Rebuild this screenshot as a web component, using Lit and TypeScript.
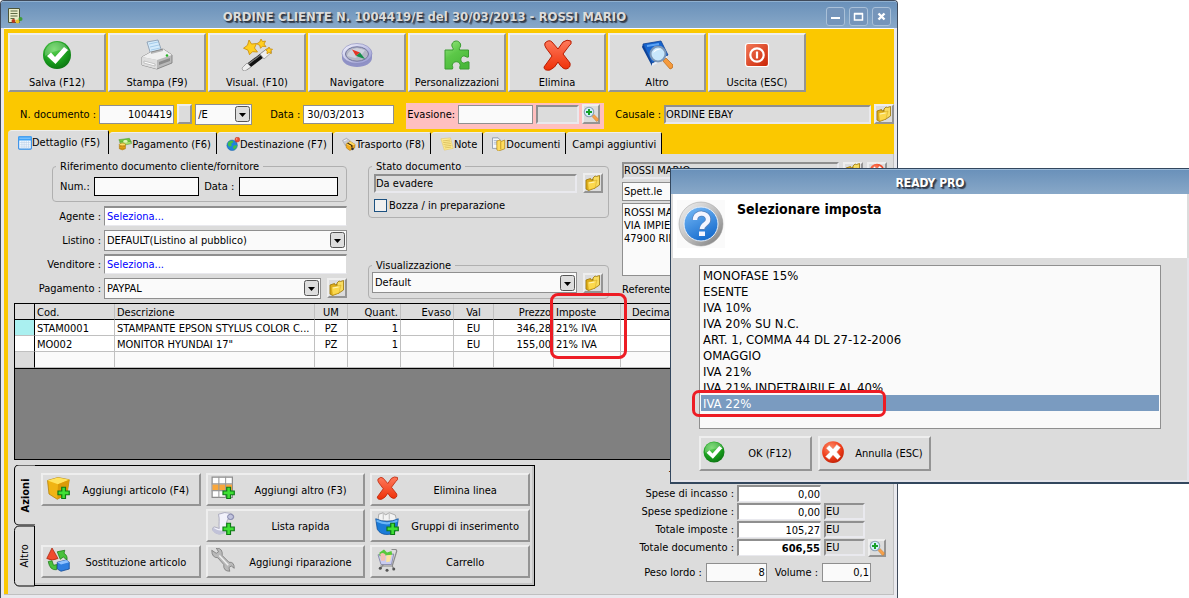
import { LitElement, html, css, svg, nothing, TemplateResult } from "lit";
import { customElement, property, state } from "lit/decorators.js";
import { classMap } from "lit/directives/class-map.js";

const plus = svg`<path d="M21 15h5v5h5v5h-5v5h-5v-5h-5v-5h5z" fill="#3fe035" stroke="#0c7a14" stroke-width="1.6"/>`;

const glyphs: Record<string, TemplateResult> = {
  check: svg`
    <defs><radialGradient id="green" cx=".4" cy=".3" r=".8"><stop offset="0" stop-color="#5fd455"/><stop offset=".6" stop-color="#179a1c"/><stop offset="1" stop-color="#0a6a10"/></radialGradient></defs>
    <circle cx="16" cy="16" r="14" fill="url(#green)"/>
    <path d="M4 12a12.500 12.500 0 0 1 24 0q-12-3-24 5z" fill="#fff" opacity=".22"/>
    <path d="M6 17l4-3.500 4 4.500 9-10 4 3-12.500 14z" fill="#fff"/>`,
  cancel: svg`
    <defs><radialGradient id="red" cx=".4" cy=".3" r=".8"><stop offset="0" stop-color="#ff8a68"/><stop offset=".6" stop-color="#ee3a17"/><stop offset="1" stop-color="#b41c04"/></radialGradient></defs>
    <circle cx="16" cy="16" r="14.500" fill="url(#red)"/>
    <path d="M7 11l4-4 5 5 5-6 5 4-5 6 5 6-4 4-6-6-5 6-5-4 6-6z" fill="#fff" stroke="#d4b0a8" stroke-width=".6"/>`,
  printer: svg`
    <path d="M6 3l11-2 4 12-11 3z" fill="#d4ebfb" stroke="#8296ac" stroke-width=".8"/>
    <path d="M8 5l9-2M9 8l9-2M10 11l9-2" stroke="#a4cbea" stroke-width="1"/>
    <path d="M1 18l9-5 12-3 9 6v8l-15 6-15-4z" fill="#b9b9b9" stroke="#777" stroke-width=".8"/>
    <path d="M1 18l9-5v2l12-3v-2l9 6-15 5z" fill="#f0f0f0"/>
    <path d="M1 18l15 3v9l-15-4z" fill="#dedede"/>
    <path d="M3 22l11 3v2l-11-3z" fill="#fff" stroke="#999" stroke-width=".5"/>
    <path d="M18 23l11-4v3l-11 4z" fill="#8b8b8b"/><circle cx="26" cy="16.500" r="1.300" fill="#28b428"/>`,
  wand: svg`
    <path d="M3 27l21-16 3 4-21 16z" fill="#111"/>
    <path d="M5 27l17-13" stroke="#7a7a7a" stroke-width="1.200"/>
    <path d="M1 29l5-5 4 4-6 4q-3 0-3-3zM19 15l8-6 4 4-8 7z" fill="#eee" stroke="#999" stroke-width=".8"/>
    <g fill="#ffcf20" stroke="#c98a05" stroke-width=".8"><path d="M8 1l2.500 4 5-.5-2 4.500 3 4-5-.3-3 3-1.500-4.500-4.500-2 4-3z"/><path d="M20 0l1.500 2.500 3-.4-1.500 3 2 2.500-3.500-.3-2 2-.8-3-3-1.500 3-1.800z"/><path d="M28 8l1 2 2.500.2-1.700 1.800.5 2.500-2.300-1-2 1.300.2-2.500-1.700-1.800 2.400-.6z"/></g>`,
  compass: svg`
    <defs><linearGradient id="rim" x2="1" y2="1"><stop stop-color="#f6f6ff"/><stop offset="1" stop-color="#9294cf"/></linearGradient></defs>
    <path d="M1 14v5c0 5 7 9 15 9s15-4 15-9v-5z" fill="#8f91c6"/>
    <ellipse cx="16" cy="14.500" rx="15" ry="10" fill="url(#rim)" stroke="#8587bb" stroke-width=".6"/>
    <ellipse cx="16" cy="15" rx="11.500" ry="7.200" fill="#b4b7c6" stroke="#70739c" stroke-width="1"/>
    <path d="M6 17q2-7 10-8l8 2q-3 6-10 8z" fill="#dadde8" opacity=".7"/>
    <path d="M11 10.500l8 3-4 3.500z" fill="#e63424"/><path d="M24 20l-9-3 4-3.500z" fill="#158d4a"/>`,
  puzzle: svg`
    <defs><linearGradient id="leaf" x2=".6" y2="1"><stop stop-color="#9be884"/><stop offset=".5" stop-color="#5cc848"/><stop offset="1" stop-color="#4ab83a"/></linearGradient></defs>
    <path d="M4 11h8c1-2-2-3-1-6 1.500-4 7-4 8.500 0 1 3-2 4-1 6h9v7c-2 1-3-1.500-5-1-3.500 1-3.500 6 0 7 2 .5 3-2 5.500-1v7h-9c-1-3 1-3 0-5-1.500-3-6-3-7.500 0-1 2 1 2 0 5H4z" fill="url(#leaf)" stroke="#3a9c30" stroke-width="1"/>`,
  cross: svg`
    <defs><linearGradient id="warm" x2="0" y2="1"><stop stop-color="#ff7a5c"/><stop offset="1" stop-color="#ee3008"/></linearGradient></defs>
    <path d="M4 4q4-4 7-1l6 7 5-7q4-3 8-1 1 3-2 5l-6 8 7 9q1 5-4 6-4 0-8-7-3 6-8 8-6 1-6-3l8-11-6-8q-2-3-1-5z" fill="url(#warm)" stroke="#b71d02" stroke-width="1"/>`,
  book: svg`
    <path d="M2 5l18-3 7 14-16 8z" fill="#1765cf" stroke="#0b3f93" stroke-width=".8"/>
    <path d="M2 5l9 19v3L1 8z" fill="#0a4199"/><path d="M11 25l15-8v2l-15 8z" fill="#e8eef8"/>
    <path d="M6 7l12-2" stroke="#5da4f5" stroke-width="2"/>
    <path d="M22 22l3-3 7 7q0 4-3 4z" fill="#f59a3c" stroke="#b96818" stroke-width=".7"/>
    <circle cx="17" cy="15" r="7.500" fill="#c8e7fb" stroke="#7b97b8" stroke-width="2"/>
    <path d="M12 14q2-5 8-4q-5 1-8 4z" fill="#fff"/>`,
  power: svg`
    <defs><linearGradient id="ember" x2="1" y2="1"><stop stop-color="#f47a58"/><stop offset="1" stop-color="#c92305"/></linearGradient></defs>
    <rect x="4.500" y="4.500" width="23" height="23" rx="2.500" fill="url(#ember)" stroke="#fff" stroke-width="1.200"/>
    <circle cx="16" cy="16" r="6.700" fill="none" stroke="#fff" stroke-width="2.200"/><path d="M16 12.500v7" stroke="#fff" stroke-width="2.200"/>`,
  folder: svg`
    <path d="M2 10l9-3 1 3 8-3v19l-13 5-5-3z" fill="#dfae18" stroke="#9a7404" stroke-width="1.600"/>
    <path d="M16 6l4-4 3 1 6-2v19l-9 6-4 1z" fill="#f8dc60" stroke="#9a7404" stroke-width="1.600"/>
    <path d="M5 14l15-3 4-1-4 16-13 4z" fill="#fcd84c" stroke="#c49a1a" stroke-width=".8"/><path d="M8 16l11-2" stroke="#fff4b8" stroke-width="2.500"/>`,
  lens: svg`
    <path d="M18 21l4-4 9 9q0 4-4 5z" fill="#f7a04a" stroke="#b97326" stroke-width=".8"/>
    <circle cx="12" cy="12" r="9.500" fill="#d4effc" stroke="#8aa0b4" stroke-width="2.200"/>
    <path d="M10 6h4v4h4v4h-4v4h-4v-4H6v-4h4z" fill="#18a02a"/>`,
  calendar: svg`
    <rect x="1.500" y="2" width="29" height="28" rx="2" fill="#f5faff" stroke="#2d8ae8" stroke-width="2.500"/>
    <path d="M1 1h30v9H1z" fill="#3da2f8"/><path d="M3 5h26" stroke="#9cd2ff" stroke-width="2"/>
    <path d="M4 15h24M4 20h24M4 25h24M9 11v18M14 11v18M19 11v18M24 11v18" stroke="#b6cde8" stroke-width="1.300"/>`,
  money: svg`
    <path d="M2 6l24-3 5 9-24 5z" fill="#6ec43e" stroke="#3e8c22"/><path d="M4 12l24-2 3 5-23 5z" fill="#a7e06a" stroke="#3e8c22"/>
    <ellipse cx="17" cy="10" rx="5" ry="3" fill="#dff5b8"/>
    <path d="M3 17h14v10q-7 5-14 0z" fill="#e9a91b" stroke="#9c6a08"/><ellipse cx="10" cy="17" rx="7" ry="3" fill="#ffdf6a" stroke="#9c6a08"/>
    <path d="M3 21q7 4 14 0M3 25q7 4 14 0" fill="none" stroke="#9c6a08"/>`,
  globe: svg`
    <circle cx="14" cy="19" r="12" fill="#1f83dd" stroke="#0e559b"/>
    <path d="M5 12q5-5 10-4l2 4-5 3 1 5-5 2-4-4zM17 20l7-2 1 5-6 6-3-4z" fill="#3fc04a"/>
    <path d="M22 14l3-6" stroke="#777" stroke-width="2"/><circle cx="26" cy="6" r="5.500" fill="#ee4a30" stroke="#b32912"/><circle cx="24.500" cy="4.500" r="1.500" fill="#ffc0b0"/>`,
  parcel: svg`
    <path d="M1 8l9-5 8 5-2 10-8 2z" fill="#c9c9cf" stroke="#8a8a92"/><path d="M4 9l7-3" stroke="#fff" stroke-width="2"/>
    <path d="M9 16l10-6 11 7-1 8-11 6-8-6z" fill="#f0a91e" stroke="#94610a"/><path d="M9 16l10 5 11-4-11-7z" fill="#ffd75e"/>
    <path d="M14 13l10 6v4l-3 1v-4l-10-6z" fill="#3a2a10"/><circle cx="24" cy="27" r="3" fill="#333"/>`,
  note: svg`
    <path d="M2 4l22-2 6 24-20 4z" fill="#ffec92" stroke="#dcbd52"/>
    <path d="M6 9l17-2M7 13l17-2M8 17l17-2M10 21l16-2M11 25l15-2" stroke="#c0a03a" stroke-width="1.200"/>`,
  docs: svg`
    <path d="M1 2h13l4 4v20H1z" fill="#f5f7fb" stroke="#6d7b91" stroke-width="1.500"/><path d="M4 8h9M4 12h9M4 16h9" stroke="#91a2bd" stroke-width="1.500"/>
    <path d="M11 9l7-2 3 3 8-3v20l-14 5-4-3z" fill="#ffdc5e" stroke="#a97f0c" stroke-width="1.500"/><path d="M20 10v18" stroke="#a97f0c" stroke-width="1.500"/>`,
  cube: svg`
    <path d="M2 6l14-4 15 3-3 19-13 7-11-7z" fill="#f0b414" stroke="#b27e04"/>
    <path d="M2 6l14-4 15 3-15 6z" fill="#ffe35e"/><path d="M16 11l15-6-3 19-13 7z" fill="#dc9a08"/>${plus}`,
  grid: svg`
    <path d="M1.500 1.500h27v27h-27z" fill="#fff" stroke="#8c8c8c" stroke-width="1.600"/><path d="M2 11h26v9H2z" fill="#f9a73c"/>
    <path d="M10.500 1v28M19.500 1v28M1 10.500h28M1 19.500h28" stroke="#999" stroke-width="1.400"/>${plus}`,
  scroll: svg`
    <path d="M10 3q8-4 17-1c5 2 4 8 0 8l-4-1c-4 6-2 10-2 15-6 7-13 6-17 2-3-3-2-6 1-6l6 2c-1-6 1-12-1-19z" fill="#f2f2fb" stroke="#9a9ab2"/>
    <ellipse cx="26" cy="6.500" rx="4" ry="3.500" fill="#c0c2dc" stroke="#70739c"/><path d="M3 21q8 6 17 3l-1 4q-10 5-17-3z" fill="#c1c2d8"/>${plus}`,
  basket: svg`
    <path d="M5 3l6-2 3 3 5-3 8 3 2 8H4z" fill="#f3f3f3" stroke="#999"/><path d="M11 2v8M19 2v8" stroke="#aaa"/>
    <path d="M1 9q15 7 30 0l-2 14q-4 7-13 7T3 23z" fill="#1b7bd8" stroke="#0b4e99"/><path d="M2 10q14 7 28 0v3q-14 7-28 0z" fill="#6ab6f7"/>${plus}`,
  shapes: svg`
    <path d="M8 0l8 14q-8 4-15 0z" fill="#f04b2e" stroke="#a9240c"/><path d="M15 5l10-2-1 4q5 3 4 9l-5-4-4 3z" fill="#49c23c" stroke="#1c7a18"/>
    <path d="M3 18l5-1 2 6 5-1-1 7q-9 1-11-11z" fill="#49c23c" stroke="#1c7a18"/>
    <path d="M15 19l12-3 4 3v9l-11 3-5-3z" fill="#2f7fe0" stroke="#12458f"/><path d="M15 19l12-3 4 3-11 3z" fill="#8fc2ff"/>`,
  wrench: svg`
    <path d="M1 3l6 4 3-2-3-5q9 0 8 10l9 9q7-1 7 8l-4-3-3 2 1 5q-9 0-8-9l-8-9Q1 13 1 3z" fill="#b9b9b9" stroke="#747474"/><path d="M11 10l12 13" stroke="#eee" stroke-width="2"/>`,
  cart: svg`
    <path d="M4 9l21-1-3 14H8z" fill="#c9ccf0" stroke="#777a9e"/><path d="M6 6l6-4 4 4 6-2 1 5-17 2z" fill="#58c83c"/><path d="M7 8q4-3 7 1l-1 8H8z" fill="#f4bfb4"/><path d="M15 10l7-1-2 9-5 1z" fill="#fbe4a0"/>
    <path d="M22 2h6l1 2-6 20H7M11 22l-3 5M23 24l2 4" fill="none" stroke="#8a8a8a" stroke-width="1.600"/><g fill="#555"><circle cx="7" cy="27" r="2"/><circle cx="16" cy="29.500" r="2"/><circle cx="25" cy="28" r="2"/></g>`,
  order: svg`
    <path d="M3 1h22v28H3z" fill="#e9edc8" stroke="#4d5538" stroke-width="2"/><path d="M7 6h14M7 11h14M7 16h14M7 21h8" stroke="#5d6b44" stroke-width="2.200"/>
    <circle cx="13" cy="26" r="4" fill="#b93a1f"/><circle cx="21" cy="27" r="4" fill="#e6c22c"/><circle cx="27" cy="22" r="4" fill="#3f9c38"/>`,
};

const icon = (name: string, size: string) =>
  html`<svg class="icon ${size}" viewBox="0 0 32 32" aria-hidden="true">${glyphs[name]}</svg>`;

const shared = css`
  :host, * { box-sizing: border-box; }
  button, input, select, textarea {
    font: inherit; color: #000; margin: 0; padding: 0; border-radius: 0; outline: none;
  }
  .icon { display: block; flex: none; }
  .s14 { width: 14px; height: 14px; }
  .s16 { width: 16px; height: 16px; }
  .s24 { width: 24px; height: 24px; }
  .s32 { width: 32px; height: 32px; }
  .raised {
    background: #dcdcdc; border: 2px solid; border-color: #eeeeee #949494 #949494 #eeeeee;
    display: flex; align-items: center; justify-content: center;
  }
`;

interface Row { code: string; text: string; unit: string; qty: string; done: string; cur: string; price: string; tax: string }

@customElement("order-window")
class OrderWindow extends LitElement {
  @state() private tab = 0;

  private tools = [
    ["check", "Salva (F12)"], ["printer", "Stampa (F9)"], ["wand", "Visual. (F10)"], ["compass", "Navigatore"],
    ["puzzle", "Personalizzazioni"], ["cross", "Elimina"], ["book", "Altro"], ["power", "Uscita (ESC)"],
  ];
  private tabs = [
    ["calendar", "Dettaglio (F5)"], ["money", "Pagamento (F6)"], ["globe", "Destinazione (F7)"], ["parcel", "Trasporto (F8)"],
    ["note", "Note"], ["docs", "Documenti"], ["", "Campi aggiuntivi"],
  ];
  private rows: Row[] = [
    { code: "STAM0001", text: "STAMPANTE EPSON STYLUS COLOR C...", unit: "PZ", qty: "1", done: "", cur: "EU", price: "346,28", tax: "21% IVA" },
    { code: "MO002", text: "MONITOR HYUNDAI 17\"", unit: "PZ", qty: "1", done: "", cur: "EU", price: "155,00", tax: "21% IVA" },
    { code: "", text: "", unit: "", qty: "", done: "", cur: "", price: "", tax: "" },
  ];
  private actions = [
    ["cube", "Aggiungi articolo (F4)"], ["grid", "Aggiungi altro (F3)"], ["cross", "Elimina linea"],
    ["", ""], ["scroll", "Lista rapida"], ["basket", "Gruppi di inserimento"],
    ["shapes", "Sostituzione articolo"], ["wrench", "Aggiungi riparazione"], ["cart", "Carrello"],
  ];

  static styles = [shared, css`
    :host { display: block; border: 1px solid #3f4a5a; border-bottom: 0; border-radius: 4px 4px 0 0; background: #e9e9ee; overflow: hidden; }
    .title { height: 27px; display: flex; align-items: center; padding: 2px 6px 0 6px; gap: 4px;
      background: linear-gradient(#6a91ba, #88a8c8); border-top: 1px solid #8fb0d0; }
    h1 { flex: 1; margin: 0; text-align: center; font: bold 13px "DejaVu Sans Condensed", "DejaVu Sans", sans-serif; color: #dcdcdc; text-shadow: 1px 1px 1px #2b3442, 2px 2px 1px #3b4656; white-space: nowrap; }
    .ctl { width: 19px; height: 19px; background: #7595ba; border: 1px solid #a9c0d8; border-radius: 3px; display: flex; align-items: center; justify-content: center; }
    .ctl svg { width: 13px; height: 11px; }
    .frame { margin: 0 3px 3px; border-top: 1px solid #fff; background: #fbc800; padding-left: 4px; border-bottom: 1px solid #c0c0c0; }
    .tools { display: flex; gap: 2px; padding: 4px 0 0; }
    .tool { width: 98px; height: 59px; flex-direction: column; justify-content: flex-start; padding-top: 4px; gap: 4px; }
    .tool span { line-height: 16px; }
    .doc { display: flex; align-items: center; height: 38px; padding: 7px 0 1px 12px; overflow: hidden; }
    .doc > * { flex: none; }
    .doc label { margin-right: 3px; }
    .field { height: 19px; border: 1px solid #8f8f8f; background: #fafafa; padding: 0 3px; min-width: 0; }
    .white { background: #fff; }
    .num { text-align: right; padding-right: 1px; }
    .flat { background: #dcdcdc; border: 2px solid; border-color: #8f8f8f #e9e9ee #e9e9ee #8f8f8f; padding: 0; height: 19px; min-width: 0; }
    .combo { height: 21px; border: 1px solid #8f8f8f; padding: 0 20px 0 2px; appearance: none; min-width: 0;
      background: #fafafa url("data:image/svg+xml,%3Csvg xmlns='http://www.w3.org/2000/svg' width='15' height='16'%3E%3Crect x='.5' y='.5' width='14' height='15' rx='2' fill='%23dedede' stroke='%23555'/%3E%3Cpath d='M4 7h7l-3.500 4z'/%3E%3C/svg%3E") no-repeat right 1px center; }
    .btn { width: 20px; height: 20px; flex: none; }
    .w15 { width: 15px; } .w43 { width: 43px; } .w57 { width: 57px; } .w75 { width: 75px; } .w91 { width: 91px; } .w99 { width: 99px; } .w105 { width: 105px; }
    .doc .m3 { margin-left: 3px; } .doc .m18 { margin-left: 18px; }
    .pink { background: #ffbfbf; height: 26px; margin-left: 12px; padding: 0 4px 4px 1px; display: flex; align-items: center; gap: 3px; width: 198px; align-self: flex-end; }
    .pink > * { flex: none; }
    .pink .btn { width: 18px; }
    .doc .pink label { margin: 0; flex: 1; }
    .cause { flex: 1 0 0; min-width: 60px; margin-right: 3px; }
    .doc .cause-label { margin-left: 11px; }
    .tabs { display: flex; height: 24px; align-items: flex-end; }
    .tab { height: 22px; border: 0; border-right: 1px solid #000; border-top: 1px solid #eee; background: #dcdcdc; display: flex; align-items: center; padding: 1px 5px 0 9px; border-radius: 4px 2px 0 0; white-space: nowrap; }
    .tab.bare { padding-left: 6px; }
    .tab.on { height: 24px; padding: 0 8px 0 10px; }
    .panel { background: #dcdcdc; padding: 6px 6px 8px; border-right: 1px solid #c0c0c0; }
    .form { display: flex; height: 143px; align-items: stretch; }
    .left { width: 339px; display: flex; flex-direction: column; gap: 4px; flex: none; margin-left: -6px; }
    .mid { width: 241px; margin-left: 21px; display: flex; flex-direction: column; justify-content: space-between; padding-bottom: 4px; flex: none; }
    .right { flex: 1; margin-left: 13px; display: flex; flex-direction: column; gap: 2px; min-width: 0; padding-top: 2px; }
    fieldset { border: 1px solid #b0b0b0; border-radius: 4px; margin: 0; padding: 0; min-width: 0; }
    legend { padding: 0 4px; margin: 0 0 0 3px; line-height: 13px; }
    .ref { margin-left: 44px; height: 42px; }
    .ref .line { padding: 4px 8px 0 7px; }
    .line { display: flex; align-items: center; justify-content: space-between; }
    .ref .field { border: 1px solid #000; }
    .line2 { display: flex; gap: 3px; height: 20px; align-items: center; }
    .line2 label { text-align: right; width: 93px; flex: none; }
    .line2 .field, .line2 .combo { flex: 1; }
    .line2 .btn { margin-left: 3px; }
    .line2 .field { height: 20px; padding: 0 2px; border-top: 2px solid #8f8f8f; border-right-color: #dcdcdc; border-bottom-color: #e9e9ee; }
    .blue { color: #0000ff; }
    .state { height: 58px; }
    .state .line { padding: 0 5px 0 5px; }
    .state .flat { width: 203px; }
    .view { height: 40px; }
    .view .line { padding: 0 5px 0 3px; }
    .view .combo { width: 205px; }
    .tick { display: flex; align-items: center; gap: 2px; margin: 6px 0 0 5px; }
    .tick input { appearance: none; width: 13px; height: 13px; border: 1px solid #1c5180; background: #f0f0f0; }
    .who { display: flex; gap: 4px; height: 18px; }
    .who .flat { flex: 1; height: 17px; }
    .who .btn { height: 18px; }
    .right .field { height: 19px; padding: 0 1px; flex: none; }
    textarea { height: 73px; resize: none; border: 1px solid #8f8f8f; background: #fafafa; padding: 2px 1px; line-height: 13px; font-family: inherit; overflow: hidden; flex: none; }
    .right label { margin-top: 5px; }
    .sheet { border: 1px solid #000; background: #808080; height: 157px; overflow: hidden; }
    table { width: 100%; table-layout: fixed; border-collapse: separate; border-spacing: 0; border-bottom: 1px solid #000; }
    th { font-weight: normal; text-align: left; background: #dcdcdc; border-bottom: 1px solid #000; height: 16px; }
    th, td { padding: 2px 2px 0; border-right: 1px solid #c0c0c0; line-height: 13px; white-space: nowrap; overflow: hidden; text-overflow: ellipsis; }
    td { height: 16px; background: #fff; border-bottom: 1px solid #c0c0c0; }
    tr:last-child td { background: #fafafa; }
    th:first-child, td:first-child { border-right: 1px solid #000; }
    tr.cur td:first-child { background: #aaf0f0; }
    tbody tr:last-child td:first-child { background: #dcdcdc; }
    .c { text-align: center; } .r { text-align: right; }
    .k0 { width: 20px; } .k1 { width: 80px; } .k2 { width: 200px; } .k3 { width: 33px; } .k4 { width: 53px; }
    .k5 { width: 40px; } .k6 { width: 60px; } .k7 { width: 67px; } .k8 { width: 57px; }
    .bottom { display: flex; justify-content: space-between; padding-top: 5px; }
    .acts { display: flex; width: 521px; flex: none; height: 121px; }
    .side { width: 21px; display: flex; flex-direction: column; flex: none; }
    .vtab { flex: 1; border: 1px solid #000; background: #dcdcdc; writing-mode: vertical-rl; transform: rotate(180deg); border-radius: 0 5px 5px 0; display: flex; align-items: center; justify-content: center; }
    .vtab.on { font-weight: bold; border-left: 0; }
    .grid { flex: 1; border: 1px solid #000; border-left: 0; padding: 7px 4px 0 6px; display: grid; grid-template-columns: repeat(3, 1fr); grid-auto-rows: 33px; gap: 3px 5px; box-shadow: inset -2px -2px 0 #c4c4c4; }
    .act { padding: 0 3px; }
    .act .icon { margin-bottom: 3px; }
    .act span { flex: 1; padding-left: 6px; padding-top: 1px; }
    .sums { display: flex; flex-direction: column; gap: 7px; }
    .tot { display: grid; grid-template-columns: auto 84px 41px 18px; column-gap: 3px; row-gap: 1px; grid-auto-rows: 17px; align-items: center; padding-right: 1px; padding-top: 2px; }
    .tot label { text-align: right; grid-column: 1; }
    .tot .field { border-width: 2px 1px 1px 2px; border-color: #8f8f8f #e9e9ee #e9e9ee #8f8f8f; background: #fff; height: 17px; padding-right: 0; }
    .tot .flat { height: 17px; }
    .tot .btn { width: 18px; height: 18px; }
    .big { font-weight: bold; }
    .peso { display: flex; align-items: center; justify-content: flex-end; gap: 4px; padding-right: 16px; }
    .peso label + input + label { margin-left: 4px; }
    .w61 { width: 61px; } .w49 { width: 49px; }
    .mark { position: absolute; left: 549px; top: 292px; width: 77px; height: 66px; border: 3px solid #ed1c24; border-radius: 8px; }
  `];

  private folder(label = "Apri") {
    return html`<button class="raised btn" aria-label=${label}>${icon("folder", "s16")}</button>`;
  }

  render() {
    return html`
      <header class="title">
        ${icon("order", "s16")}
        <h1>ORDINE CLIENTE N. 1004419/E del 30/03/2013 - ROSSI MARIO</h1>
        <button class="ctl" aria-label="Riduci"><svg viewBox="0 0 13 11"><path d="M2 7h9" stroke="#fff" stroke-width="2"/></svg></button>
        <button class="ctl" aria-label="Ingrandisci"><svg viewBox="0 0 13 11"><path d="M2.500 3h8v6h-8zM2 2.500h9" fill="none" stroke="#fff" stroke-width="1.500"/></svg></button>
        <button class="ctl" aria-label="Chiudi"><svg viewBox="0 0 13 11"><path d="M3.500 2.500l6 6m0-6l-6 6" stroke="#fff" stroke-width="2.400"/></svg></button>
      </header>
      <div class="frame">
        <nav class="tools">
          ${this.tools.map(([i, t]) => html`<button class="raised tool">${icon(i, "s32")}<span>${t}</span></button>`)}
        </nav>
        <div class="doc">
          <label for="nd">N. documento :</label><input id="nd" class="field num w75" value="1004419">
          <button class="raised btn w15 m3" aria-label="Numero"></button>
          <select class="combo w57 m3" aria-label="Serie"><option>/E</option></select>
          <label for="dt" class="m18">Data :</label><input id="dt" class="field white w91" value="30/03/2013">
          <div class="pink">
            <label for="ev">Evasione:</label><input id="ev" class="field w75"><input class="flat w43" readonly aria-label="Data evasione">
            <button class="raised btn" aria-label="Cerca">${icon("lens", "s16")}</button>
          </div>
          <label for="ca" class="cause-label">Causale :</label><input id="ca" class="flat cause" readonly value="ORDINE EBAY">
          ${this.folder()}
        </div>
        <div class="tabs" role="tablist">
          ${this.tabs.map(([i, t], n) => html`<button role="tab" class=${classMap({ tab: true, on: n === this.tab, bare: !i })}
            @click=${() => (this.tab = n)}>${i ? icon(i, "s14") : nothing}${t}</button>`)}
        </div>
        <div class="panel">
          <div class="form">
            <div class="left">
              <fieldset class="ref">
                <legend>Riferimento documento cliente/fornitore</legend>
                <div class="line"><label for="rn">Num.:</label><input id="rn" class="field w105"><label for="rd">Data :</label><input id="rd" class="field w99"></div>
              </fieldset>
              <div class="line2"><label for="ag">Agente :</label><input id="ag" class="field white blue" value="Seleziona..."></div>
              <div class="line2"><label for="li">Listino :</label><select id="li" class="combo"><option>DEFAULT(Listino al pubblico)</option></select></div>
              <div class="line2"><label for="ve">Venditore :</label><input id="ve" class="field white blue" value="Seleziona..."></div>
              <div class="line2"><label for="pa">Pagamento :</label><select id="pa" class="combo"><option>PAYPAL</option></select>${this.folder()}</div>
            </div>
            <div class="mid">
              <fieldset class="state">
                <legend>Stato documento</legend>
                <div class="line"><input class="flat" readonly value="Da evadere" aria-label="Stato documento">${this.folder()}</div>
                <label class="tick"><input type="checkbox">Bozza / in preparazione</label>
              </fieldset>
              <fieldset class="view">
                <legend>Visualizzazione</legend>
                <div class="line"><select class="combo" aria-label="Visualizzazione"><option>Default</option></select>${this.folder()}</div>
              </fieldset>
            </div>
            <div class="right">
              <div class="who"><input class="flat" readonly value="ROSSI MARIO" aria-label="Cliente">${this.folder()}
                <button class="raised btn" aria-label="Rimuovi">${icon("cancel", "s16")}</button></div>
              <input class="field" value="Spett.le" aria-label="Titolo">
              <textarea aria-label="Indirizzo" .value=${"ROSSI MARIO\nVIA IMPIEGO, 1\n47900 RIMINI"}></textarea>
              <label>Referente :</label>
            </div>
          </div>
          <div class="sheet">
            <table>
              <colgroup><col class="k0"><col class="k1"><col class="k2"><col class="k3"><col class="k4"><col class="k4"><col class="k5"><col class="k6"><col class="k7"><col class="k8"><col></colgroup>
              <thead><tr><th></th><th>Cod.</th><th>Descrizione</th><th class="c">UM</th><th class="r">Quant.</th><th class="r">Evaso</th><th class="c">Val</th><th class="r">Prezzo</th><th>Imposte</th><th class="r">Decimali</th><th></th></tr></thead>
              <tbody>
                ${this.rows.map((r, n) => html`<tr class=${n === 0 ? "cur" : ""}><td></td><td>${r.code}</td><td>${r.text}</td><td class="c">${r.unit}</td><td class="r">${r.qty}</td><td class="r">${r.done}</td><td class="c">${r.cur}</td><td class="r">${r.price}</td><td>${r.tax}</td><td></td><td></td></tr>`)}
              </tbody>
            </table>
          </div>
          <div class="bottom">
            <div class="acts">
              <div class="side"><button class="vtab on">Azioni</button><button class="vtab">Altro</button></div>
              <div class="grid">
                ${this.actions.map(([i, t]) => (t ? html`<button class="raised act">${icon(i, "s24")}<span>${t}</span></button>` : html`<div></div>`))}
              </div>
            </div>
            <div class="sums">
              <div class="tot">
                <label for="t0">Totale netto :</label><input id="t0" class="field num" value="501,28"><input class="flat" readonly value="EU" aria-label="Valuta"><i></i>
                <label for="t1">Spese di incasso :</label><input id="t1" class="field num" value="0,00"><i></i><i></i>
                <label for="t2">Spese spedizione :</label><input id="t2" class="field num" value="0,00"><input class="flat" readonly value="EU" aria-label="Valuta"><i></i>
                <label for="t3">Totale imposte :</label><input id="t3" class="field num" value="105,27"><input class="flat" readonly value="EU" aria-label="Valuta"><i></i>
                <label for="t4">Totale documento :</label><input id="t4" class="field num big" value="606,55"><input class="flat" readonly value="EU" aria-label="Valuta">
                <button class="raised btn" aria-label="Dettagli">${icon("lens", "s16")}</button>
              </div>
              <div class="peso"><label for="pl">Peso lordo :</label><input id="pl" class="field num w61" value="8"><label for="vo">Volume :</label><input id="vo" class="field num w49" value="0,1"></div>
            </div>
          </div>
        </div>
      </div>
      <div class="mark"></div>`;
  }
}

@customElement("tax-dialog")
class TaxDialog extends LitElement {
  @property({ type: Array }) options: string[] = [];

  static styles = [shared, css`
    :host { display: block; border: 1px solid #33475e; border-right: 0; border-bottom-width: 2px; background: #dcdcdc; }
    .bar { height: 25px; background: linear-gradient(#6a91ba, #88a8c8); border-top: 1px solid #9dbbd8; text-align: center; color: #fff; font: bold 12px/26px "DejaVu Sans Condensed", "DejaVu Sans", sans-serif; text-shadow: 1px 1px 1px #2b3442, 2px 2px 1px #3b4656; }
    .head { margin: 0 2px; height: 64px; background: #fff; display: flex; gap: 12px; padding: 6px 4px; }
    .head svg { width: 48px; height: 48px; background: #fafafa; flex: none; }
    h2 { margin: 0; font: bold 14px/18px "DejaVu Sans Condensed", "DejaVu Sans", sans-serif; }
    .body { padding: 7px 26px 9px 28px; border: 2px solid #e4e4ea; border-top: 0; border-left: 0; }
    .list { display: block; width: 100%; height: 164px; border: 1px solid #8f8f8f; background: #fafafa; font-size: 13px; padding: 1px; overflow: hidden; }
    .list option { height: 16px; min-height: 16px; line-height: 14px; padding: 1px 2px; color: #000; }
    .list option:checked { background: #7a9bc0 linear-gradient(#7a9bc0, #7a9bc0); color: #fff; -webkit-text-fill-color: #fff; }
    .btns { display: flex; gap: 6px; margin-top: 7px; }
    .btns .raised { width: 113px; height: 35px; padding: 0 2px 3px 1px; }
    .btns span { flex: 1; padding-left: 6px; padding-top: 3px; }
    .mark { position: absolute; left: 21px; top: 221px; width: 194px; height: 27px; border: 3px solid #ed1c24; border-radius: 7px; }
  `];

  render() {
    return html`
      <div class="bar">READY PRO</div>
      <div class="head">
        <svg viewBox="0 0 48 48" aria-hidden="true">
          <defs><linearGradient id="ring" x2="1" y2="1"><stop stop-color="#f4f4f4"/><stop offset=".5" stop-color="#c0c0c0"/><stop offset="1" stop-color="#777"/></linearGradient>
            <linearGradient id="sky" x2=".5" y2="1"><stop stop-color="#7abcf8"/><stop offset="1" stop-color="#1a6fcf"/></linearGradient></defs>
          <circle cx="24" cy="24" r="22" fill="url(#ring)" stroke="#999" stroke-width=".5"/><circle cx="24" cy="24" r="17" fill="url(#sky)" stroke="#e8f0fa" stroke-width="1"/>
          <path d="M18 20c0-9 14-8 13 0 0 4-6 5-6 10" fill="none" stroke="#5580bb" stroke-width="6"/>
          <path d="M18 20c0-9 14-8 13 0 0 4-6 4-6 9" fill="none" stroke="#f4f5ff" stroke-width="4.500"/><rect x="22" y="31.500" width="6" height="4.500" fill="#f4f5ff"/>
        </svg>
        <h2>Selezionare imposta</h2>
      </div>
      <div class="body">
        <select class="list" size="10" aria-label="Imposta">
          ${this.options.map((o) => html`<option ?selected=${o === "IVA 22%"}>${o}</option>`)}
        </select>
        <div class="btns">
          <button class="raised">${icon("check", "s24")}<span>OK (F12)</span></button>
          <button class="raised">${icon("cancel", "s24")}<span>Annulla (ESC)</span></button>
        </div>
      </div>
      <div class="mark"></div>`;
  }
}

@customElement("app-root")
class AppRoot extends LitElement {
  private taxes = ["MONOFASE 15%", "ESENTE", "IVA 10%", "IVA 20% SU N.C.", "ART. 1, COMMA 44 DL 27-12-2006", "OMAGGIO", "IVA 21%", "IVA 21% INDETRAIBILE AL 40%", "IVA 22%"];

  static styles = css`
    :host { display: block; position: relative; background: #fff; font: 11px/13px "DejaVu Sans Condensed", "DejaVu Sans", sans-serif; color: #000; }
    order-window { position: relative; width: calc(100% - 291px); min-width: 898px; }
    tax-dialog { position: absolute; right: 0; top: 168px; width: 519px; }
  `;

  render() {
    return html`<order-window></order-window><tax-dialog .options=${this.taxes}></tax-dialog>`;
  }
}
